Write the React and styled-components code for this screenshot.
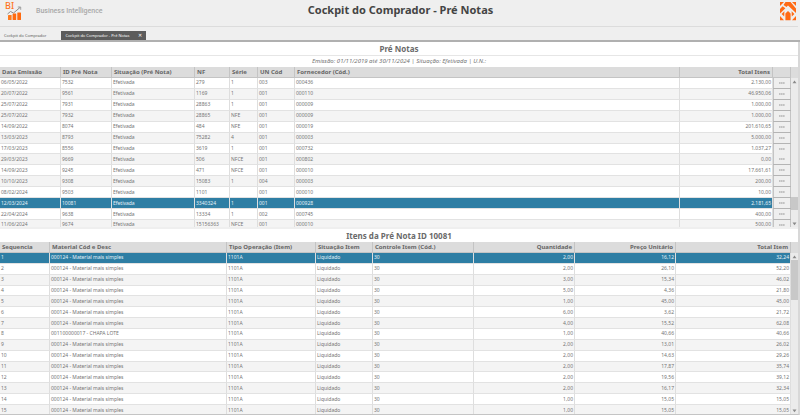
import { useState } from "react"
import styled, { createGlobalStyle } from "styled-components"

const GlobalStyle = createGlobalStyle`
  * {
    box-sizing: border-box;
  }

  html,
  body,
  #root {
    height: 100%;
    margin: 0;
  }

  body {
    background-color: #efefef;
    color: #747474;
    font-family: "Noto Sans", "Open Sans", sans-serif;
    font-size: 5px;
    overflow: hidden;
  }

  button {
    font-family: inherit;
    margin: 0;
    border: 0;
    cursor: pointer;
  }
`

const Page = styled.div`
  display: flex;
  flex-direction: column;
  height: 100vh;
`

const TopBar = styled.header`
  display: grid;
  grid-template-columns: 1fr auto 1fr;
  align-items: start;
  height: 27px;
  margin-right: 2px;
  padding: 1px 2px 0 5px;
  border-bottom: 1px solid #dcdcdc;
`

const Brand = styled.div`
  display: flex;
  align-items: flex-start;
  gap: 14px;
`

const BrandName = styled.span`
  padding-top: 5px;
  color: #a8a8a8;
  font-family: Roboto, sans-serif;
  font-size: 7px;
  font-weight: 500;
  line-height: 10px;
`

const PageTitle = styled.h1`
  margin: 0;
  color: #444;
  font-size: 11px;
  line-height: 18px;
`

const CompanyLogo = styled.svg`
  justify-self: end;
`

const Tabs = styled.nav`
  display: flex;
  align-items: flex-end;
  gap: 11px;
  height: 15px;
  border-bottom: 2px solid #b0b0b0;
`

const Tab = styled.button`
  display: flex;
  align-items: center;
  gap: 8px;
  height: 9px;
  padding: 0 4px;
  background-color: ${(props) => (props.$active ? "#5c5c5c" : "transparent")};
  color: ${(props) => (props.$active ? "#fff" : "#555")};
  font-size: 4px;
  line-height: 9px;
`

const CloseMark = styled.span`
  font-size: 5px;
`

const Content = styled.main`
  display: flex;
  flex-direction: column;
  flex: 1;
  min-height: 0;
  border-right: 2px solid #d8d8d8;
  border-bottom: 1px solid #c4c4c4;
`

const Panel = styled.section`
  display: flex;
  flex-direction: column;
  flex: ${(props) => (props.$grow ? "1" : "none")};
  min-height: 0;
  margin-bottom: ${(props) => (props.$grow ? 0 : "2px")};
  background-color: #fff;
`

const PanelTitle = styled.h2`
  margin: 0;
  color: #6a6a6a;
  font-size: 8px;
  line-height: 13px;
  text-align: center;
`

const Filters = styled.p`
  margin: 0;
  border-top: 1px solid #e6e6e6;
  color: #747474;
  font-size: 6px;
  font-style: italic;
  line-height: 11px;
  text-align: center;
`

const Grid = styled.div`
  display: flex;
  flex: 1;
  min-height: 0;
  overflow: hidden;
`

const Clip = styled.div`
  flex: 1;
  min-width: 0;
  height: ${(props) => props.$height};
  overflow: hidden;
`

const Table = styled.table`
  width: 100%;
  height: ${(props) => props.$height};
  border-collapse: separate;
  border-spacing: 0;
  table-layout: fixed;
  font-size: 5px;
  line-height: 9px;
`

const HeadCell = styled.th`
  height: 11px;
  padding: 0 2px;
  background-color: #dcdcdc;
  border-right: 1px solid #c4c4c4;
  border-bottom: 1px solid #c4c4c4;
  color: #666;
  font-size: 6px;
  font-weight: bold;
  text-align: ${(props) => (props.$right ? "right" : "left")};
  white-space: nowrap;
`

const Row = styled.tr`
  background-color: ${(props) => (props.$odd ? "#f4f4f4" : "#fff")};

  &[aria-selected="true"] {
    background-color: #2e7ea4;
    color: #e4f2f8;
  }
`

const Cell = styled.td`
  padding: 0 1px;
  border-right: 1px solid #dedede;
  border-bottom: 1px solid #e2e2e2;
  text-align: ${(props) => (props.$right ? "right" : "left")};
  white-space: nowrap;
`

const ActionCell = styled.td`
  padding: 0;
  background-color: #b4b4b4;
  vertical-align: top;
`

const MoreButton = styled.button`
  display: grid;
  place-items: center;
  width: 100%;
  height: 10px;
  padding: 0;
  background-color: #efefef;
  border-right: 1px solid #c4c4c4;
  border-left: 1px solid #c4c4c4;
`

const Scroll = styled.div`
  display: flex;
  flex-direction: column;
  width: 7px;
  padding-top: 11px;
  background: linear-gradient(#dcdcdc 11px, #ebebeb 11px);
`

const ScrollButton = styled.button`
  display: grid;
  place-items: center;
  height: 7px;
  padding: 0;
  background-color: transparent;
`

const ScrollTrack = styled.div`
  display: flex;
  flex-direction: column;
  flex: 1;
`

const ScrollSpace = styled.div`
  flex: ${(props) => props.$size};
`

const ScrollThumb = styled.div`
  flex: ${(props) => props.$size};
  background-color: #c8c8c8;
`

const preNotas = [
  ["06/05/2022", "7532", "Efetivada", "279", "1", "003", "000436", "2.130,00"],
  ["20/07/2022", "9561", "Efetivada", "1169", "1", "001", "000110", "46.950,06"],
  ["25/07/2022", "7931", "Efetivada", "28863", "1", "001", "000009", "1.000,00"],
  ["25/07/2022", "7932", "Efetivada", "28865", "NFE", "001", "000009", "1.000,00"],
  ["14/09/2022", "8074", "Efetivada", "484", "NFE", "001", "000019", "201.610,65"],
  ["13/03/2023", "8793", "Efetivada", "75282", "4", "001", "000003", "5.000,00"],
  ["17/03/2023", "8556", "Efetivada", "3619", "1", "001", "000732", "1.037,27"],
  ["29/03/2023", "9669", "Efetivada", "506", "NFCE", "001", "000802", "0,00"],
  ["14/09/2023", "9245", "Efetivada", "471", "NFCE", "001", "000010", "17.661,61"],
  ["10/10/2023", "9308", "Efetivada", "15083", "1", "004", "000003", "200,00"],
  ["08/02/2024", "9503", "Efetivada", "1101", "", "001", "000010", "10,00"],
  ["12/03/2024", "10081", "Efetivada", "3340324", "1", "001", "000928", "2.181,65"],
  ["22/04/2024", "9638", "Efetivada", "13334", "1", "002", "000745", "400,00"],
  ["11/06/2024", "9674", "Efetivada", "15156363", "NFCE", "001", "000010", "500,00"],
]

const material = "000124 - Material mais simples"

const itens = [
  [material, "2,00", "16,12", "32,24"],
  [material, "2,00", "26,10", "52,20"],
  [material, "3,00", "15,34", "46,02"],
  [material, "5,00", "4,36", "21,80"],
  [material, "1,00", "45,00", "45,00"],
  [material, "6,00", "3,62", "21,72"],
  [material, "4,00", "15,52", "62,08"],
  ["001100000017 - CHAPA LOTE", "1,00", "40,66", "40,66"],
  [material, "2,00", "13,01", "26,02"],
  [material, "2,00", "14,63", "29,26"],
  [material, "2,00", "17,87", "35,74"],
  [material, "2,00", "19,56", "39,12"],
  [material, "2,00", "16,17", "32,34"],
  [material, "1,00", "15,05", "15,05"],
  [material, "1,00", "15,05", "15,05"],
].map(([desc, ...values], i) => [String(i + 1), desc, "1101A", "Liquidado", "30", ...values])

const notaColumns = [
  { label: "Data Emissão", width: 61 },
  { label: "ID Pré Nota", width: 51 },
  { label: "Situação (Pré Nota)", width: 83 },
  { label: "NF", width: 35 },
  { label: "Série", width: 28 },
  { label: "UN Cód", width: 37 },
  { label: "Fornecedor (Cód.)" },
  { label: "Total Itens", width: 93, right: true },
]

const itemColumns = [
  { label: "Sequencia", width: 50 },
  { label: "Material Cód e Desc", width: 177 },
  { label: "Tipo Operação (Item)", width: 89 },
  { label: "Situação Item", width: 57 },
  { label: "Controle Item (Cód.)", width: 101 },
  { label: "Quantidade", width: 101, right: true },
  { label: "Preço Unitário", width: 101, right: true },
  { label: "Total Item", right: true },
]

const BiLogo = () => (
  <svg width="17" height="20" viewBox="0 0 17 20" overflow="visible" aria-label="BI">
    <text x="0" y="8" fontFamily="Noto Sans" fontSize="9" fontWeight="500" fill="#ff7420">
      BI
    </text>
    <path d="M2.5 13 L5.5 10.5 L8.5 12 L15 6.5" fill="none" stroke="#8c8c8c" strokeWidth="1" />
    <path d="M12.8 6 H15.7 V8.8" fill="none" stroke="#8c8c8c" strokeWidth="0.8" />
    <rect x="3" y="14" width="3.6" height="5" rx="0.5" fill="#ff7a1c" />
    <rect x="7.6" y="12.5" width="3.6" height="6.5" rx="0.5" fill="#ff6a10" />
    <rect x="12.3" y="11.5" width="3.7" height="7.5" rx="0.5" fill="#ff6a10" />
  </svg>
)

const MoreIcon = () => (
  <svg width="6" height="2" viewBox="0 0 6 2" fill="#808080">
    <rect x="0.2" y="0.5" width="1.3" height="1" />
    <rect x="2.2" y="0.5" width="1.3" height="1" />
    <rect x="4.2" y="0.5" width="1.3" height="1" />
  </svg>
)

const ScrollArrow = ({ down }) => (
  <svg width="5" height="4" viewBox="0 0 5 4">
    <path d={down ? "M0.5 0.5 L2.5 3.2 L4.5 0.5 Z" : "M0.5 3.2 L2.5 0.5 L4.5 3.2 Z"} fill="#8a8a8a" />
  </svg>
)

const ScrollBar = ({ before, thumb, after }) => (
  <Scroll>
    <ScrollButton aria-label='Rolar para cima'>
      <ScrollArrow />
    </ScrollButton>
    <ScrollTrack>
      <ScrollSpace $size={before} />
      <ScrollThumb $size={thumb} />
      <ScrollSpace $size={after} />
    </ScrollTrack>
    <ScrollButton aria-label='Rolar para baixo'>
      <ScrollArrow down />
    </ScrollButton>
  </Scroll>
)

const DataTable = ({ columns, rows, height, initial, actions, shade = 1 }) => {
  const [selected, setSelected] = useState(initial)

  return (
    <Table $height={height}>
      <colgroup>
        {columns.map((col) => (
          <col key={col.label} width={col.width} />
        ))}
        {actions && <col width={18} />}
      </colgroup>
      <thead>
        <tr>
          {columns.map((col) => (
            <HeadCell key={col.label} $right={col.right}>
              {col.label}
            </HeadCell>
          ))}
          {actions && <HeadCell />}
        </tr>
      </thead>
      <tbody>
        {rows.map((row, i) => (
          <Row
            key={i}
            $odd={i % 2 === shade}
            aria-selected={i === selected}
            onClick={() => setSelected(i)}>
            {row.map((value, j) => (
              <Cell key={j} $right={columns[j].right}>
                {value}
              </Cell>
            ))}
            {actions && (
              <ActionCell>
                <MoreButton aria-label={`Opções da pré nota ${row[1]}`}>
                  <MoreIcon />
                </MoreButton>
              </ActionCell>
            )}
          </Row>
        ))}
      </tbody>
    </Table>
  )
}

const App = () => {
  return (
    <Page>
      <GlobalStyle />
      <TopBar>
        <Brand>
          <BiLogo />
          <BrandName>Business Intelligence</BrandName>
        </Brand>
        <PageTitle>Cockpit do Comprador - Pré Notas</PageTitle>
        <CompanyLogo width='16' height='20' viewBox='0 0 16 20' fill='#ff6a14'>
          <path d='M0 1 H4 L0 5 Z' />
          <path d='M16 1 H12 L16 5 Z' />
          <path d='M5.5 1 H10.5 L16 7.5 V12 L8 4.5 L6.5 6 L3.5 4 Z' />
          <path d='M2.6 5.2 L5.4 7.2 L0 12.4 V8 Z' />
          <path d='M8 10 L10.6 12.4 V19.3 H5.4 V12.4 Z' />
          <path d='M0 15 L4 19.3 H0 Z' />
          <path d='M16 15 L12 19.3 H16 Z' />
          <path d='M4.4 10.2 L1.6 13 L4.2 15.6 Z' />
          <path d='M11.6 10.2 L14.4 13 L11.8 15.6 Z' />
        </CompanyLogo>
      </TopBar>
      <Tabs>
        <Tab>Cockpit do Comprador</Tab>
        <Tab $active>
          Cockpit do Comprador - Pré Notas <CloseMark>✕</CloseMark>
        </Tab>
      </Tabs>
      <Content>
        <Panel>
          <PanelTitle>Pré Notas</PanelTitle>
          <Filters>Emissão: 01/11/2019 até 30/11/2024 | Situação: Efetivada | U.N.:</Filters>
          <Grid>
            <Clip $height='160px'>
              <DataTable columns={notaColumns} rows={preNotas} height='164px' initial={11} actions />
            </Clip>
            <ScrollBar before={112} thumb={13} after={10} />
          </Grid>
        </Panel>
        <Panel $grow>
          <PanelTitle>Itens da Pré Nota ID 10081</PanelTitle>
          <Grid>
            <Clip>
              <DataTable
                columns={itemColumns}
                rows={itens}
                height='calc(100% + 2px)'
                initial={0}
                shade={0}
              />
            </Clip>
            <ScrollBar before={0} thumb={40} after={108} />
          </Grid>
        </Panel>
      </Content>
    </Page>
  )
}

export default App
